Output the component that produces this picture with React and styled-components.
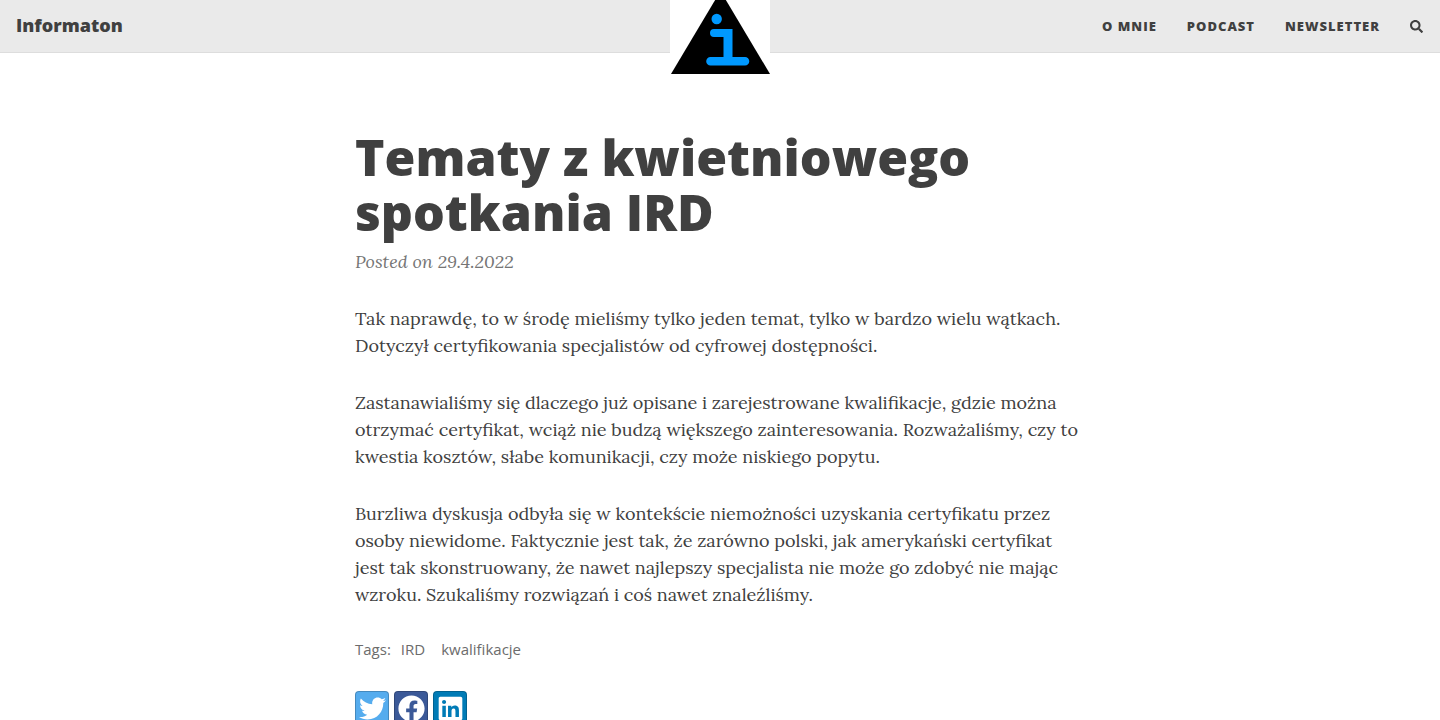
import React from "react";
import styled, { createGlobalStyle } from "styled-components";
import { FaSearch, FaTwitter, FaFacebook, FaLinkedin } from "react-icons/fa";

const sans = `"Open Sans", "Liberation Sans", sans-serif`;
const serif = `Lora, "Liberation Serif", serif`;

const GlobalStyle = createGlobalStyle`
  *, *::before, *::after { box-sizing: border-box; }
  body {
    margin: 0;
    background: #fff;
    color: #404040;
    font-family: ${serif};
    font-size: 18px;
    line-height: 27px;
  }
`;

const Navbar = styled.header`
  position: relative;
  display: flex;
  align-items: center;
  justify-content: space-between;
  height: 53px;
  padding: 0 16px;
  background: #eaeaea;
  border-bottom: 1px solid #ddd;
  font-family: ${sans};
`;

const Brand = styled.a`
  padding-bottom: 2px;
  color: #404040;
  font-size: 18px;
  font-weight: 800;
  text-decoration: none;
`;

const Avatar = styled.a`
  position: absolute;
  top: 0;
  left: 50%;
  width: 100px;
  margin-left: -50px;
  background: #fff;

  svg { display: block; }
`;

const Menu = styled.nav`
  display: flex;
  align-items: center;
  gap: 30px;
`;

const MenuLink = styled.a`
  color: #404040;
  font-size: 13px;
  font-weight: 800;
  letter-spacing: 1px;
  text-transform: uppercase;
  text-decoration: none;
`;

const SearchButton = styled.button`
  display: flex;
  padding: 0 1px 0 0;
  border: 0;
  background: none;
  color: #404040;
  font-size: 13px;
`;

const Article = styled.main`
  max-width: 760px;
  margin: 0 auto;
  padding: 77px 15px 40px;
`;

const Title = styled.h1`
  margin: 0;
  font-family: ${sans};
  font-size: 50px;
  font-weight: 800;
  line-height: 55px;
`;

const Meta = styled.p`
  margin: 8px 0 30px;
  color: #757575;
  font-style: italic;
`;

const Paragraph = styled.p`
  margin: 0 0 30px;
`;

const Tags = styled.div`
  display: flex;
  gap: 10px;
  margin-top: -2px;
  color: #6c6c6c;
  font-family: ${sans};
  font-size: 15px;
`;

const TagList = styled.div`
  display: flex;
  gap: 16px;
`;

const TagLink = styled.a`
  color: inherit;
  text-decoration: none;
`;

const Share = styled.div`
  display: flex;
  gap: 5px;
  margin-top: 28px;
`;

const ShareLink = styled.a`
  display: flex;
  align-items: center;
  justify-content: center;
  width: 34px;
  height: 34px;
  border: 1px solid rgba(0, 0, 0, 0.2);
  border-radius: 4px;
  background: ${(p) => p.$color};
  color: #fff;
  font-size: 27px;
`;

const paragraphs = [
  "Tak naprawdę, to w środę mieliśmy tylko jeden temat, tylko w bardzo wielu wątkach. Dotyczył certyfikowania specjalistów od cyfrowej dostępności.",
  "Zastanawialiśmy się dlaczego już opisane i zarejestrowane kwalifikacje, gdzie można otrzymać certyfikat, wciąż nie budzą większego zainteresowania. Rozważaliśmy, czy to kwestia kosztów, słabe komunikacji, czy może niskiego popytu.",
  "Burzliwa dyskusja odbyła się w kontekście niemożności uzyskania certyfikatu przez osoby niewidome. Faktycznie jest tak, że zarówno polski, jak amerykański certyfikat jest tak skonstruowany, że nawet najlepszy specjalista nie może go zdobyć nie mając wzroku. Szukaliśmy rozwiązań i coś nawet znaleźliśmy.",
];

export default function App() {
  return (
    <>
      <GlobalStyle />
      <Navbar>
        <Brand href="#">Informaton</Brand>
        <Avatar href="#" aria-label="Informaton">
          <svg width="100" height="85" viewBox="0 0 100 85" aria-hidden="true">
            <path d="M50.500 -9L1 74H100Z" fill="#000" />
            <circle cx="46.700" cy="19" r="5.200" fill="#0099ff" />
            <path
              d="M44 29H62.500V57H75a4.300 4.300 0 0 1 0 8.600H40.500a4.300 4.300 0 0 1 0-8.600H53.500V37H44a4 4 0 0 1 0-8Z"
              fill="#0099ff"
            />
          </svg>
        </Avatar>
        <Menu>
          <MenuLink href="#">O mnie</MenuLink>
          <MenuLink href="#">Podcast</MenuLink>
          <MenuLink href="#">Newsletter</MenuLink>
          <SearchButton type="button" aria-label="Search">
            <FaSearch />
          </SearchButton>
        </Menu>
      </Navbar>
      <Article>
        <Title>Tematy z kwietniowego spotkania IRD</Title>
        <Meta>Posted on 29.4.2022</Meta>
        {paragraphs.map((text) => (
          <Paragraph key={text}>{text}</Paragraph>
        ))}
        <Tags>
          <span>Tags:</span>
          <TagList>
            <TagLink href="#">IRD</TagLink>
            <TagLink href="#">kwalifikacje</TagLink>
          </TagList>
        </Tags>
        <Share>
          <ShareLink href="#" aria-label="Twitter" $color="#55acee"><FaTwitter /></ShareLink>
          <ShareLink href="#" aria-label="Facebook" $color="#3b5998"><FaFacebook /></ShareLink>
          <ShareLink href="#" aria-label="LinkedIn" $color="#007bb6"><FaLinkedin /></ShareLink>
        </Share>
      </Article>
    </>
  );
}
